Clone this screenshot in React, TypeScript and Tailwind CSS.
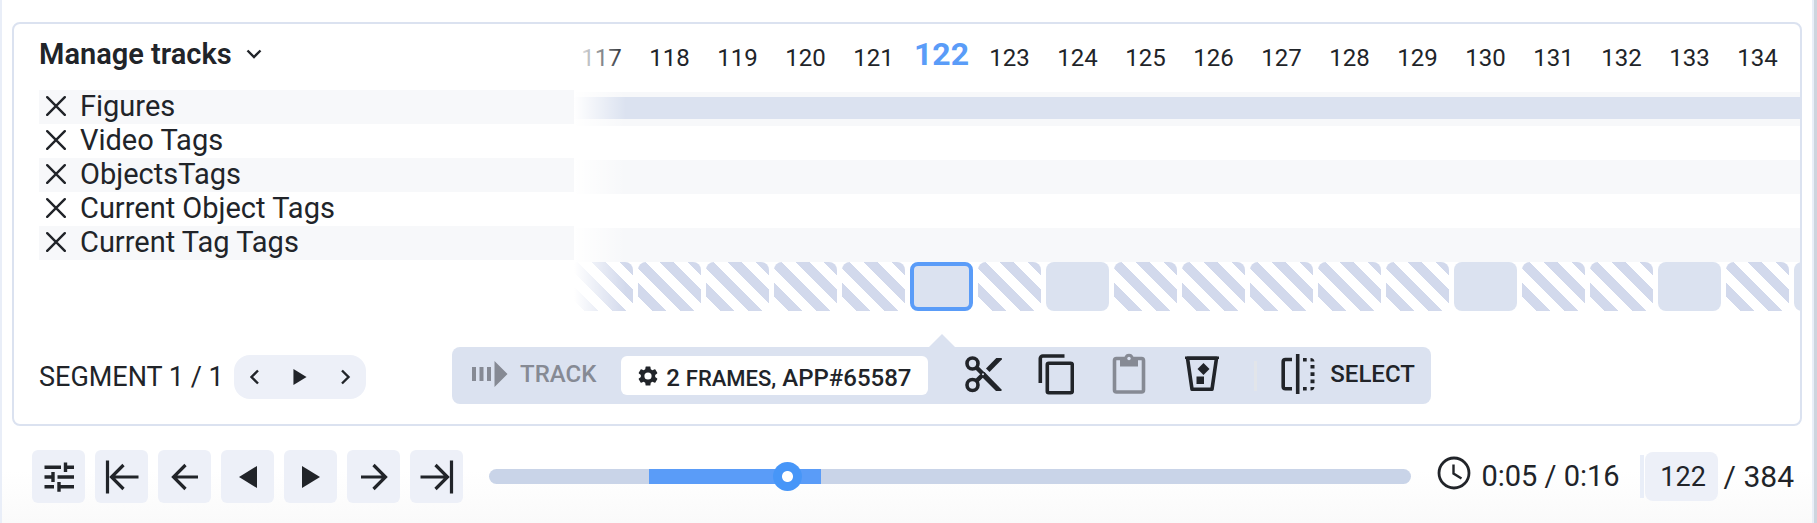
import React, { useState } from "react";

type FrameKind = "striped" | "solid";

const frames: { id: number; kind: FrameKind }[] = Array.from({ length: 19 }, (_, i) => {
  const id = 117 + i;
  return { id, kind: [122, 124, 130, 133, 135].includes(id) ? "solid" : "striped" };
});

const tracks = ["Figures", "Video Tags", "ObjectsTags", "Current Object Tags", "Current Tag Tags"];

function CloseIcon() {
  return (
    <svg viewBox="0 0 20 20" className="size-5" fill="none" stroke="currentColor" strokeWidth="2.4" strokeLinecap="round" aria-hidden="true">
      <path d="M1.2 1.2 18.8 18.8M18.8 1.2 1.2 18.8" />
    </svg>
  );
}

function PlayIcon({ className }: { className: string }) {
  return (
    <svg viewBox="0 0 18 22" className={className} fill="currentColor" aria-hidden="true">
      <path d="M0 0 18 11 0 22Z" />
    </svg>
  );
}

function Chevron({ d }: { d: string }) {
  return (
    <svg viewBox="0 0 16 16" className="size-4" fill="none" stroke="currentColor" strokeWidth="2.4" aria-hidden="true">
      <path d={d} />
    </svg>
  );
}

function ArrowIcon({ stop = false, flip = false }: { stop?: boolean; flip?: boolean }) {
  return (
    <svg
      viewBox="0 0 34 34"
      className={flip ? "size-[34px] -scale-x-100" : "size-[34px]"}
      fill="none"
      stroke="currentColor"
      strokeWidth="3.2"
      aria-hidden="true"
    >
      {stop ? (
        <path d="M2.500 .5V33.500M33.500 17H6.500M18.500 5 6.500 17l12 12" />
      ) : (
        <path d="M30 17H5.500M17.500 5 5.500 17l12 12" />
      )}
    </svg>
  );
}

function TuneIcon() {
  return (
    <svg viewBox="0 0 30 30" className="size-[30px]" fill="none" stroke="currentColor" strokeWidth="3.4" aria-hidden="true">
      <path d="M.5 5.300H17M21 5.300h9M21.500.5v9.600M.5 15H9M13.500 15H30M9 10v10M.5 24.700h9.500M15 24.700h15M15 20v9.800" />
    </svg>
  );
}

function ScissorsIcon() {
  return (
    <svg viewBox="0 0 38 38" className="size-[38px]" fill="none" stroke="currentColor" aria-hidden="true">
      <circle cx="8.500" cy="8.500" r="5.500" strokeWidth="3.600" />
      <circle cx="8.500" cy="30" r="5.500" strokeWidth="3.600" />
      <path d="M12 26.500 19 19.500M12 12 20 20" strokeWidth="4.500" />
      <path d="M17.500 17 20.500 17 37.500 34.500V36H32L17 21Z" fill="currentColor" stroke="none" />
      <path d="M22 13.500 32.300 3H37.800V4.500L25.500 17Z" fill="currentColor" stroke="none" />
      <circle cx="19" cy="19.300" r="1" fill="#dbe2f0" stroke="none" />
    </svg>
  );
}

function CopyIcon() {
  return (
    <svg viewBox="0 0 36 42" className="h-[42px] w-9" fill="none" stroke="currentColor" strokeWidth="3.600" aria-hidden="true">
      <path d="M2.300 30V5.500A2.500 2.500 0 0 1 4.800 3H26.500" />
      <rect x="9.300" y="10.300" width="25" height="29.500" rx="1.500" />
    </svg>
  );
}

function PasteIcon() {
  return (
    <svg viewBox="0 0 34 42" className="h-[42px] w-[34px]" aria-hidden="true">
      <rect x="2.500" y="5.500" width="29" height="33.500" rx="2" fill="none" stroke="currentColor" strokeWidth="3.600" />
      <path d="M8 4h4.500a4.700 4.700 0 0 1 9 0H26v9.500H8Z" fill="currentColor" />
      <circle cx="17" cy="5.500" r="1.700" fill="#dbe2f0" />
    </svg>
  );
}

function BinIcon() {
  return (
    <svg viewBox="0 0 34 38" className="h-[38px] w-[34px]" aria-hidden="true">
      <path d="M2.500 3.300h29L27 34.200H7Z" fill="none" stroke="currentColor" strokeWidth="3.600" strokeLinejoin="round" />
      <path d="M0 1.500H34V4H0Z" fill="currentColor" />
      <path d="M18.500 8 24.500 14l-6 6-6-6Z" fill="currentColor" />
      <path d="M11.500 21.500h7.500v7.500h-7.500Z" fill="currentColor" />
    </svg>
  );
}

function SelectIcon() {
  return (
    <svg viewBox="0 0 34 40" className="h-10 w-[34px]" aria-hidden="true">
      <path d="M11 5.500H4.500A2.300 2.300 0 0 0 2.200 7.800V32.500a2.300 2.300 0 0 0 2.300 2.300H11" fill="none" stroke="currentColor" strokeWidth="3.600" />
      <path d="M16.700 0V40" stroke="currentColor" strokeWidth="3.600" />
      <path
        d="M22 4h3.700v3.600H22ZM29.500 4A4 4 0 0 1 33.500 7.600H29.500ZM29.500 11h4v3.600h-4ZM29.500 18.300h4v3.600h-4ZM29.500 25.600h4v3.600h-4ZM29.500 33h4a4 4 0 0 1-4 3.600ZM22 33h3.700v3.600H22Z"
        fill="currentColor"
      />
    </svg>
  );
}

function TrackIcon() {
  return (
    <svg viewBox="0 0 36 26" className="h-[26px] w-9" fill="currentColor" aria-hidden="true">
      <path d="M0 6h4v14H0ZM7.500 6h4v14h-4ZM15 6h4v14h-4ZM22.500 0 35.500 13l-13 13Z" />
    </svg>
  );
}

function GearIcon() {
  return (
    <svg viewBox="2 2 20 20" className="size-5" fill="currentColor" aria-hidden="true">
      <path d="M19.140 12.940c.040-.300.060-.610.060-.940s-.020-.640-.070-.940l2.030-1.580a.49.49 0 0 0 .120-.610l-1.920-3.320a.49.49 0 0 0-.590-.220l-2.390.960a7 7 0 0 0-1.620-.940l-.360-2.540a.48.48 0 0 0-.480-.410h-3.840a.47.47 0 0 0-.470.410l-.360 2.540a7.200 7.200 0 0 0-1.620.940l-2.390-.960a.48.48 0 0 0-.590.220L2.740 8.870a.47.47 0 0 0 .120.610l2.030 1.580a6 6 0 0 0-.020 1.880l-2.030 1.580a.49.49 0 0 0-.120.610l1.920 3.320c.120.220.370.290.590.220l2.390-.960c.500.380 1.030.700 1.620.940l.360 2.540c.050.240.240.410.480.410h3.840c.240 0 .440-.170.470-.410l.360-2.540a7 7 0 0 0 1.620-.940l2.390.960c.220.080.470 0 .590-.220l1.920-3.320a.47.47 0 0 0-.120-.610ZM12 15.600a3.600 3.600 0 1 1 0-7.200 3.600 3.600 0 0 1 0 7.200Z" />
    </svg>
  );
}

function ClockIcon() {
  return (
    <svg viewBox="0 0 34 34" className="mb-2 size-[34px]" fill="none" stroke="currentColor" aria-hidden="true">
      <circle cx="17" cy="17" r="15" strokeWidth="2.800" />
      <path d="M16.500 8.500V17.500L24.500 22.500" strokeWidth="2.400" />
    </svg>
  );
}

function SquareButton({ label, children }: { label: string; children: React.ReactNode }) {
  return (
    <button type="button" aria-label={label} className="flex size-[53px] shrink-0 items-center justify-center rounded-md bg-[#edf0f8]">
      {children}
    </button>
  );
}

function ToolButton({ label, disabled = false, children }: { label: string; disabled?: boolean; children: React.ReactNode }) {
  return (
    <button type="button" aria-label={label} disabled={disabled} className="flex w-[73px] shrink-0 justify-center disabled:text-[#868a94]">
      {children}
    </button>
  );
}

export default function App() {
  const [frame, setFrame] = useState(122);

  return (
    <div className="border-r-3 border-[#cdd5de] font-['Roboto',sans-serif] text-[#212429]">
      <main className="border-x-2 border-[#e9eef8] bg-gradient-to-b from-white from-90% to-[#fafafa] px-2.5 pt-[22px] pb-5">
        <section className="overflow-hidden rounded-lg border-2 border-[#dbe2f0] pb-5 pl-[25px]">
          <div className="flex">
            <div className="w-[535px] shrink-0">
              <button type="button" className="flex h-[66px] items-center gap-3.5 pb-1.5 text-[29px] leading-8 font-semibold">
                Manage tracks
                <Chevron d="M1.500 4.500 8 11l6.500-6.500" />
              </button>
              <ul>
                {tracks.map((name) => (
                  <li key={name} className="flex h-[34px] items-center gap-3.5 pb-0.5 pl-[7px] text-[29px] leading-8 odd:bg-[#f7f8fa]">
                    <button type="button" aria-label={`Remove ${name}`}>
                      <CloseIcon />
                    </button>
                    {name}
                  </li>
                ))}
              </ul>
            </div>

            <div className="relative min-w-0 flex-1 overflow-hidden">
              <div className="-ml-1 flex h-[68px] gap-[5px]">
                {frames.slice(0, 18).map(({ id }) => (
                  <span
                    key={id}
                    className={
                      id === 122
                        ? "w-[63px] shrink-0 pt-2.5 text-center text-[32px] leading-10 font-bold text-[#5a9cf8]"
                        : "w-[63px] shrink-0 pt-3.5 text-center text-2xl leading-10"
                    }
                  >
                    {id}
                  </span>
                ))}
              </div>
              <div>
                {tracks.map((name, i) => (
                  <div key={name} className="h-[34px] pt-[5px] odd:bg-[#f7f8fa]">
                    {i === 0 && <div className="h-[22px] bg-[#dbe2f0]" />}
                  </div>
                ))}
              </div>
              <div className="-ml-1 flex gap-[5px]">
                {frames.map(({ id, kind }) => (
                  <button
                    key={id}
                    type="button"
                    aria-label={`Frame ${id}`}
                    className={
                      id === 122
                        ? "h-[49px] w-[63px] shrink-0 rounded-lg border-4 border-[#5a9cf8] bg-[#dbe2f0]"
                        : kind === "solid"
                          ? "h-[49px] w-[63px] shrink-0 rounded-lg bg-[#dbe2f0]"
                          : "h-[49px] w-[63px] shrink-0 rounded-lg bg-[repeating-linear-gradient(45deg,#fff_0_10px,#d2d9ec_10px_20px)]"
                    }
                  />
                ))}
              </div>
              <div className="pointer-events-none absolute inset-y-0 left-0 w-13 bg-gradient-to-r from-white to-transparent" />
            </div>
          </div>

          <div className="mt-9 flex items-start">
            <div className="mt-2 flex h-11 w-[413px] shrink-0 items-center gap-2.5 text-[27px]">
              <span>SEGMENT 1 / 1</span>
              <div className="flex h-11 w-[132px] items-center justify-between rounded-2xl bg-[#edf0f8] px-[13px]">
                <button type="button" aria-label="Previous segment">
                  <Chevron d="M11 1.500 4.500 8 11 14.500" />
                </button>
                <button type="button" aria-label="Play segment">
                  <PlayIcon className="h-4 w-[14px]" />
                </button>
                <button type="button" aria-label="Next segment">
                  <Chevron d="M5 1.500 11.500 8 5 14.500" />
                </button>
              </div>
            </div>

            <div className="relative flex h-[57px] w-[979px] items-center rounded-lg bg-[#dbe2f0]">
              <svg viewBox="0 0 28 14" className="absolute -top-[13px] left-1/2 h-3.5 w-7 -translate-x-1/2" fill="#dbe2f0" aria-hidden="true">
                <path d="M14 0 28 14H0Z" />
              </svg>
              <button type="button" disabled className="ml-5 flex items-center gap-3 pb-1 text-2xl font-medium text-[#868a94]">
                <TrackIcon />
                TRACK
              </button>
              <button type="button" className="ml-[25px] flex h-[39px] w-[307px] items-center justify-center gap-2 rounded-md bg-white text-2xl font-medium">
                <GearIcon />
                <span className="pt-1">
                  2 <span className="text-[22px]">FRAMES,</span> APP#65587
                </span>
              </button>
              <div className="ml-[18px] flex items-center pb-1">
                <ToolButton label="Cut"><ScissorsIcon /></ToolButton>
                <ToolButton label="Copy"><CopyIcon /></ToolButton>
                <ToolButton label="Paste" disabled><PasteIcon /></ToolButton>
                <ToolButton label="Delete"><BinIcon /></ToolButton>
              </div>
              <span className="ml-4 h-[30px] w-[3px] bg-[#e2e5ea]" />
              <button type="button" className="ml-6 flex items-center gap-[15px] pb-1 text-2xl font-medium">
                <SelectIcon />
                SELECT
              </button>
            </div>
          </div>
        </section>

        <div className="mt-6 flex items-center pl-5">
          <div className="flex gap-2.5">
            <SquareButton label="Settings"><TuneIcon /></SquareButton>
            <SquareButton label="First frame"><ArrowIcon stop /></SquareButton>
            <SquareButton label="Previous frame"><ArrowIcon /></SquareButton>
            <SquareButton label="Play backwards"><PlayIcon className="h-[22px] w-[18px] -scale-x-100" /></SquareButton>
            <SquareButton label="Play"><PlayIcon className="h-[22px] w-[18px]" /></SquareButton>
            <SquareButton label="Next frame"><ArrowIcon flip /></SquareButton>
            <SquareButton label="Last frame"><ArrowIcon stop flip /></SquareButton>
          </div>
          <input
            type="range"
            aria-label="Frame position"
            min={0}
            max={384}
            value={frame}
            onChange={(e) => setFrame(Number(e.target.value))}
            className="mx-[26px] h-[15px] min-w-0 flex-1 appearance-none rounded-full bg-[linear-gradient(to_right,#c9d4e8_17.4%,#5a9cf8_17.4%_36%,#c9d4e8_36%)] [&::-webkit-slider-thumb]:size-[29px] [&::-webkit-slider-thumb]:appearance-none [&::-webkit-slider-thumb]:rounded-full [&::-webkit-slider-thumb]:bg-[radial-gradient(circle,#fff_5px,#4796f8_6px)]"
          />
          <div className="flex items-center gap-2.5 text-[29px]">
            <ClockIcon />
            <span>0:05 / 0:16</span>
          </div>
          <span className="ml-5 h-[43px] w-1 bg-[#e9eef8]" />
          <label className="flex items-center gap-1.5 pr-2 pl-px text-[30px]">
            <input
              type="text"
              aria-label="Current frame"
              value={frame}
              onChange={(e) => setFrame(Number(e.target.value) || 0)}
              className="h-[49px] w-[73px] rounded-lg bg-[#edf0f8] pl-1 text-center text-[27px]"
            />
            <span>/ 384</span>
          </label>
        </div>
      </main>
    </div>
  );
}
